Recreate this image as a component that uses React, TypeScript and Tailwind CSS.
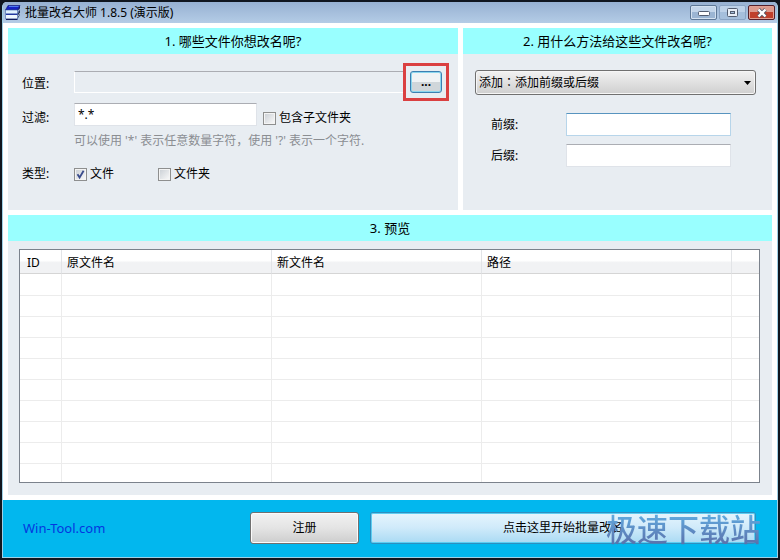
import type { ReactNode } from 'react';

const columns = [
  { name: 'ID', width: 'w-[42px]' },
  { name: '原文件名', width: 'w-[210px]' },
  { name: '新文件名', width: 'w-[210px]' },
  { name: '路径', width: 'w-[250px]' },
  { name: '', width: '' },
];

const emptyRows = Array.from({ length: 10 }, (_, i) => i);

function AppIcon() {
  return (
    <svg width="16" height="16" viewBox="0 0 16 16" aria-hidden="true">
      <path d="M3 0.5H15L12.5 5H0.5Z" fill="#1723c4" stroke="#0c1470" strokeWidth="0.6" />
      <path d="M4 1.5H13.5" stroke="#4f7cf0" />
      <path d="M15 0.5V4L12.5 8V5Z" fill="#0c1470" />
      <path d="M0.5 5H12.5V9H0.5Z" fill="#dff1ff" stroke="#3c5fa8" strokeWidth="0.6" />
      <path d="M15 4.5V9.5L12.5 14V9Z" fill="#26365e" />
      <path d="M0.5 9.5H12.5V14H0.5Z" fill="#eef7ff" stroke="#3c5fa8" strokeWidth="0.6" />
      <path d="M1 9.3H12.5" stroke="#1c2f9c" strokeWidth="1.2" />
      <path d="M1 14.4H12.5" stroke="#101c5c" strokeWidth="1.2" />
      <path d="M12.8 6.5L15 3.5M12.8 11.5L15 8" stroke="#c8d8ea" strokeWidth="0.8" />
    </svg>
  );
}

function Caption({ children }: { children: ReactNode }) {
  return <h2 className="bg-[#99ffff] text-center text-[13px] leading-[26px]">{children}</h2>;
}

function CheckBox({ label, checked = false }: { label: string; checked?: boolean }) {
  return (
    <label className="flex items-center gap-[3px]">
      <span className="relative flex">
        <input
          type="checkbox"
          defaultChecked={checked}
          className="peer size-[13px] appearance-none border border-[#8e8f8f] bg-linear-to-br from-[#c9ced4] to-[#fbfbfb] shadow-[inset_0_0_0_1px_#f4f4f4]"
        />
        <svg
          viewBox="0 0 13 13"
          className="pointer-events-none absolute inset-0 hidden size-[13px] peer-checked:block"
          aria-hidden="true"
        >
          <path d="M3.5 6.2L5.6 9.5L9.6 2.8" fill="none" stroke="#3a4c8c" strokeWidth="1.8" />
        </svg>
      </span>
      {label}
    </label>
  );
}

const textBox =
  'h-[23px] border border-[#dfe3e9] border-t-[#abadb3] bg-white px-[3px] outline-none';

export default function App() {
  return (
    <div className="bg-[#10161f] p-[2px] font-['Noto_Sans','Noto_Sans_CJK_SC',sans-serif] text-[12px] leading-[18px] text-black">
      <div className="rounded-t-[5px] border-x border-b border-[#9fd0e6] bg-white">
        <header className="flex h-[21px] items-center rounded-t-[4px] bg-linear-to-b from-[#97b1d2] to-[#b4cce6] pr-[2px] pl-[2px]">
          <AppIcon />
          <h1 className="ml-1 flex-1">批量改名大师 1.8.5 (演示版)</h1>
          <div className="flex gap-[2px]">
            <button
              aria-label="最小化"
              className="flex h-[15px] w-[27px] items-center justify-center rounded-[2px] border border-[#5d7796] bg-linear-to-b from-[#c3d5ea] from-50% to-[#9bb5d3] to-50% shadow-[inset_0_0_0_1px_#d3e1f0]"
            >
              <svg width="12" height="6" viewBox="0 0 12 6">
                <rect x="0.5" y="1.5" width="11" height="4" rx="1" fill="#fff" stroke="#535d70" />
              </svg>
            </button>
            <button
              aria-label="最大化"
              className="flex h-[15px] w-[27px] items-center justify-center rounded-[2px] border border-[#8aa4c4] bg-linear-to-b from-[#bdd1e8] from-50% to-[#a5bfdc] to-50%"
            >
              <svg width="11" height="9" viewBox="0 0 11 9">
                <rect x="0.5" y="0.5" width="10" height="8" rx="1" fill="#e9eff7" stroke="#535d70" />
                <rect x="3.5" y="3.5" width="4" height="2" fill="#a5bfdc" stroke="#535d70" />
              </svg>
            </button>
            <button
              aria-label="关闭"
              className="flex h-[15px] w-[27px] items-center justify-center rounded-[2px] border border-[#55202a] bg-linear-to-b from-[#dd9a8e] from-50% to-[#c0402c] to-50% shadow-[inset_0_0_0_1px_#e0a093]"
            >
              <svg width="12" height="10" viewBox="0 0 12 10">
                <path d="M2.5 1.5L9.5 8.5M9.5 1.5L2.5 8.5" stroke="#535666" strokeWidth="4" />
                <path d="M2.5 1.5L9.5 8.5M9.5 1.5L2.5 8.5" stroke="#fff" strokeWidth="2.4" />
              </svg>
            </button>
          </div>
        </header>

        <main className="p-[5px]">
          <div className="grid grid-cols-[minmax(0,450fr)_minmax(0,309fr)] gap-[5px]">
            <section className="bg-[#e8edf2]">
              <Caption>1. 哪些文件你想改名呢?</Caption>
              <div className="pt-[9px] pr-[9px] pb-[27px] pl-[14px]">
                <div className="flex items-center">
                  <label htmlFor="location" className="w-[52px] pt-1">
                    位置:
                  </label>
                  <input
                    id="location"
                    disabled
                    className="h-[22px] min-w-0 flex-1 border border-r-0 border-t-[#abadb3] border-b-white border-l-white bg-[#e8edf2]"
                  />
                  <div className="border-[3px] border-[#da4041] px-1 py-[5px]">
                    <button
                      aria-label="浏览"
                      className="block h-[22px] w-8 rounded-[3px] border border-[#3c7fb1] bg-linear-to-b from-[#f0f3f5] from-50% to-[#d0d6da] to-50% leading-[18px] font-bold shadow-[inset_0_0_0_1px_#8bd6ee]"
                    >
                      ...
                    </button>
                  </div>
                </div>
                <div className="mt-[2px] flex h-6 items-end">
                  <label htmlFor="filter" className="w-[52px]">
                    过滤:
                  </label>
                  <input
                    id="filter"
                    defaultValue="*.*"
                    className={`${textBox} mr-[6px] w-[183px] self-start`}
                  />
                  <CheckBox label="包含子文件夹" />
                </div>
                <p className="mt-[5px] ml-[52px] whitespace-nowrap text-[#8b8e92]">
                  可以使用 '*' 表示任意数量字符，使用 '?' 表示一个字符.
                </p>
                <div className="mt-[15px] flex items-center">
                  <span className="w-[52px]">类型:</span>
                  <span className="w-[84px]">
                    <CheckBox label="文件" checked />
                  </span>
                  <CheckBox label="文件夹" />
                </div>
              </div>
            </section>

            <section className="bg-[#e8edf2]">
              <Caption>2. 用什么方法给这些文件改名呢?</Caption>
              <div className="pt-4 pr-4 pl-3">
                <div className="relative">
                  <select
                    aria-label="改名方法"
                    className="block h-[25px] w-full appearance-none rounded-[3px] border border-[#707070] bg-linear-to-b from-[#f2f2f2] to-[#cfcfcf] px-[3px] font-['Noto_Sans','Noto_Sans_CJK_JP',sans-serif] shadow-[inset_0_0_0_1px_#f6f6f6]"
                  >
                    <option>添加：添加前缀或后缀</option>
                  </select>
                  <svg
                    width="7"
                    height="4"
                    viewBox="0 0 7 4"
                    className="pointer-events-none absolute top-[11px] right-[5px]"
                    aria-hidden="true"
                  >
                    <path d="M0 0H7L3.5 4Z" fill="#000" />
                  </svg>
                </div>
                <div className="mt-[18px] flex flex-col gap-2 pr-[25px] pl-4">
                  <div className="flex items-center">
                    <label htmlFor="prefix" className="w-[75px]">
                      前缀:
                    </label>
                    <input
                      id="prefix"
                      className="h-[23px] min-w-0 flex-1 border border-[#b7d5ea] border-t-[#5794bf] bg-white px-[3px] outline-none"
                    />
                  </div>
                  <div className="flex items-center">
                    <label htmlFor="suffix" className="w-[75px]">
                      后缀:
                    </label>
                    <input id="suffix" className={`${textBox} min-w-0 flex-1`} />
                  </div>
                </div>
              </div>
            </section>
          </div>

          <section className="mt-[5px] bg-[#e8edf2]">
            <Caption>3. 预览</Caption>
            <div className="pt-2 pr-3 pb-3 pl-[11px]">
              <div className="border border-[#7b828c] bg-white">
                <table className="w-full table-fixed border-separate border-spacing-0">
                  <thead>
                    <tr className="h-6">
                      {columns.map((c, i) => (
                        <th
                          key={i}
                          className={`${c.width} border-r border-b border-r-[#e2e4e7] border-b-[#d5d5d5] bg-linear-to-b from-white from-45% to-[#f1f2f4] to-55% p-0 pt-[2px] pl-[5px] text-left font-normal first:pl-[7px] last:border-r-0`}
                        >
                          {c.name}
                        </th>
                      ))}
                    </tr>
                  </thead>
                  <tbody>
                    {emptyRows.map((r) => (
                      <tr key={r} className="h-[21px] first:h-[22px] last:h-[18px]">
                        {columns.map((_, i) => (
                          <td
                            key={i}
                            className={`border-[#ececec] p-0 ${i < 4 ? 'border-r' : ''} ${r < 9 ? 'border-b' : ''}`}
                          />
                        ))}
                      </tr>
                    ))}
                  </tbody>
                </table>
              </div>
            </div>
          </section>
        </main>

        <footer className="flex items-center bg-[#02b7ee] pt-3 pr-[21px] pb-[13px] pl-5">
          <a href="#home" className="w-[227px] text-[13px] text-[#0536e0]">
            Win-Tool.com
          </a>
          <button className="h-8 w-[109px] rounded-[3px] border border-[#707070] bg-linear-to-b from-[#f2f2f2] via-[#e4e4e4] via-50% to-[#cdcdcd] shadow-[inset_0_0_0_1px_#fbfbfb]">
            注册
          </button>
          <div className="relative ml-[11px] flex-1">
            <button className="block h-8 w-full rounded-[3px] border border-[#2d8fc0] bg-linear-to-b from-[#e6f5fd] via-[#cfeafa] via-50% to-[#a9daf3] shadow-[inset_0_0_0_1px_#5ccdf2]">
              点击这里开始批量改名
            </button>
            <span className="pointer-events-none absolute top-0 -right-[5px] bg-linear-to-b from-[#5fb0e4] to-[#5a6ea8] bg-clip-text text-[31px] leading-[34px] font-medium whitespace-nowrap text-transparent">
              极速下载站
            </span>
          </div>
        </footer>
      </div>
    </div>
  );
}
